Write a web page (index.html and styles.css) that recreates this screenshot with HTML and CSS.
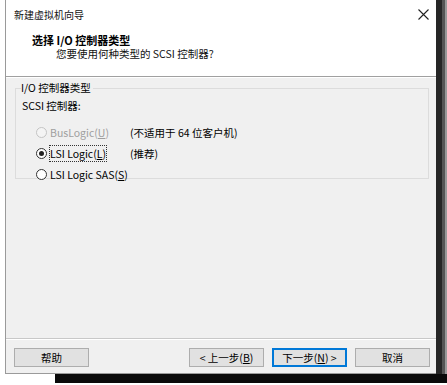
FILE: index.html
```html
<!DOCTYPE html>
<html>
<head>
<meta charset="utf-8">
<link rel="stylesheet" href="styles.css">
</head>
<body>
<div class="stage">
  <div class="window">
    <div class="titlebar">
      <span class="title">新建虚拟机向导</span>
      <svg class="close" width="11" height="11" viewBox="0 0 11 11"><path d="M0.5 0.5 L10.5 10.5 M10.5 0.5 L0.5 10.5" stroke="#222" stroke-width="1.1" fill="none"/></svg>
    </div>
    <div class="header">
      <div class="h-title">选择 I/O 控制器类型</div>
      <div class="h-sub">您要使用何种类型的 SCSI 控制器?</div>
    </div>
    <div class="content">
      <fieldset class="group">
        <legend>I/O 控制器类型</legend>
        <div class="label">SCSI 控制器:</div>
        <div class="options">
          <div class="opt disabled">
            <span class="radio"></span><span class="text">BusLogic(<u>U</u>)</span>
            <span class="note">(不适用于 64 位客户机)</span>
          </div>
          <div class="opt">
            <span class="radio on"></span><span class="text"><span class="focus">LSI Logic(<u>L</u>)</span></span>
            <span class="note">(推荐)</span>
          </div>
          <div class="opt">
            <span class="radio"></span><span class="text">LSI Logic SAS(<u>S</u>)</span>
          </div>
        </div>
      </fieldset>
    </div>
    <div class="footer">
      <button class="btn">帮助</button>
      <div class="spacer"></div>
      <button class="btn">&lt; 上一步(<u>B</u>)</button>
      <button class="btn default">下一步(<u>N</u>) &gt;</button>
      <button class="btn">取消</button>
    </div>
  </div>
</div>
</body>
</html>
```
FILE: styles.css
```css
html, body {
  margin: 0;
  padding: 0;
  background: #ffffff;
  width: 447px;
  height: 385px;
  overflow: hidden;
}
body {
  font-family: "Noto Sans CJK SC", "Noto Sans", sans-serif;
  font-size: 10.5px;
  color: #000;
}
.stage {
  padding-left: 5px;
}
.window {
  width: 430px;
  height: 373px;
  border-left: 1px solid #9a9a9a;
  border-bottom: 1px solid #9a9a9a;
  background: #f0f0f0;
  display: flex;
  flex-direction: column;
  box-shadow: 6px 0 0 #262626, 9px 0 0 #555, 11px 0 0 #999, 50px 9px 0 #0a0a0a;
}
.titlebar {
  height: 28px;
  background: #fff;
  display: flex;
  align-items: center;
  justify-content: space-between;
  padding: 0 7px 0 8px;
}
.title {
  font-size: 10px;
  color: #111;
}
.header {
  height: 48px;
  background: #fff;
  border-bottom: 1px solid #a0a0a0;
  box-shadow: 0 1px 0 #ffffff;
  padding-left: 26px;
}
.h-title {
  font-weight: bold;
  font-size: 11px;
  line-height: 14px;
  margin-top: 5px;
}
.h-sub {
  padding-left: 24px;
  font-size: 10.5px;
  line-height: 14px;
  color: #111;
}
.content {
  flex: 1;
  padding: 5px 7px 0 9px;
  border-bottom: 1px solid #c8c8c8;
  box-shadow: 0 1px 0 #fff;
}
.group {
  margin: 0;
  border: 1px solid #dcdcdc;
  border-radius: 0;
  padding: 0 0 6px 6px;
  height: 97px;
  box-sizing: border-box;
}
.group legend {
  padding: 0 2px 0 0;
  margin-left: -1px;
  font-size: 10.5px;
  line-height: 12px;
  color: #000;
}
.label {
  margin-top: 5px;
  line-height: 14px;
}
.options {
  display: flex;
  flex-direction: column;
  gap: 8px;
  margin-top: 13px;
  padding-left: 14px;
}
.opt {
  display: flex;
  align-items: center;
  height: 13px;
  white-space: nowrap;
}
.radio {
  flex: none;
  width: 9px;
  height: 9px;
  border: 1px solid #333;
  border-radius: 50%;
  background: #fff;
  margin-right: 3px;
  display: flex;
  align-items: center;
  justify-content: center;
}
.radio.on::after {
  content: "";
  width: 5px;
  height: 5px;
  border-radius: 50%;
  background: #222;
}
.text {
  flex: none;
  min-width: 80px;
  line-height: 12px;
  font-size: 10.5px;
}
.focus {
  outline: 1px dotted #333;
  outline-offset: 0;
}
.disabled .radio {
  border-color: #c4c4c4;
  background: #f4f4f4;
}
.disabled .text {
  color: #9f9f9f;
}
.note {
  font-size: 10.5px;
}
.footer {
  height: 34px;
  display: flex;
  align-items: center;
  padding: 2px 6px 0 8px;
  box-sizing: border-box;
  gap: 8px;
}
.spacer {
  flex: 1;
}
.btn {
  width: 75px;
  height: 19px;
  box-sizing: border-box;
  background: #e1e1e1;
  border: 1px solid #adadad;
  font-family: "Noto Sans CJK SC", "Noto Sans", sans-serif;
  font-size: 10.5px;
  color: #000;
  padding: 0;
  line-height: 15px;
}
.btn.default {
  border: 2px solid #0078d7;
  line-height: 13px;
}
```
